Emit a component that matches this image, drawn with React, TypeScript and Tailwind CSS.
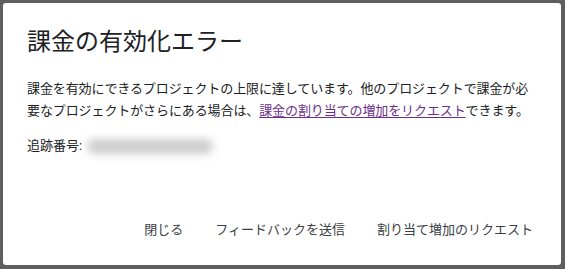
import React from 'react';

const font = { fontFamily: "Roboto, 'Noto Sans CJK JP', sans-serif" };

const DialogButton = ({ label }: { label: string }) => (
  <button className="h-9 px-4 rounded text-[13px] leading-9 text-[#3c4043] hover:bg-gray-100">
    {label}
  </button>
);

const App = () => {
  return (
    <div className="w-[565px] h-[269px] bg-[#5f5f5f] pl-[3px] pt-[3px] pr-[4px] pb-[4px]" style={font}>
      <div className="w-full h-full bg-white rounded-[3px] flex flex-col">
        <div className="px-6 pt-[23px]">
          <h1 className="text-[24px] leading-8 text-[#202124] font-normal">課金の有効化エラー</h1>

          <p className="mt-5 text-[13px] leading-[22px] text-[#202124] tracking-[-0.1px]">
            課金を有効にできるプロジェクトの上限に達しています。他のプロジェクトで課金が必要なプロジェクトがさらにある場合は、
            <a href="#" className="text-[#6b2f8a] underline underline-offset-2">
              課金の割り当ての増加をリクエスト
            </a>
            できます。
          </p>

          <div className="mt-[13px] flex items-center text-[13px] leading-[22px] text-[#202124]">
            <span>追跡番号:</span>
            <div className="ml-[5px] w-[126px] h-[15px] rounded-full bg-[#cdcdcd] blur-[4px]" />
          </div>
        </div>

        <div className="mt-auto flex justify-end pr-3 pb-[17px]">
          <DialogButton label="閉じる" />
          <DialogButton label="フィードバックを送信" />
          <DialogButton label="割り当て増加のリクエスト" />
        </div>
      </div>
    </div>
  );
};

export default App;
